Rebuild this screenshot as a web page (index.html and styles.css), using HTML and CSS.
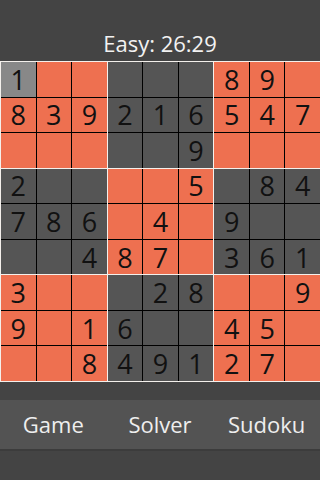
FILE: index.html
```html
<!DOCTYPE html>
<html lang="en">
<head>
  <meta charset="UTF-8">
  <meta name="viewport" content="width=device-width, initial-scale=1.0">
  <title>Sudoku</title>
  <link rel="stylesheet" href="styles.css">
</head>
<body>
  <div class="title">Easy: 26:29</div>
  <div class="board">
    <div class="box warm">
      <div class="cell selected">1</div><div class="cell"></div><div class="cell"></div>
      <div class="cell">8</div><div class="cell">3</div><div class="cell">9</div>
      <div class="cell"></div><div class="cell"></div><div class="cell"></div>
    </div>
    <div class="box cool">
      <div class="cell"></div><div class="cell"></div><div class="cell"></div>
      <div class="cell">2</div><div class="cell">1</div><div class="cell">6</div>
      <div class="cell"></div><div class="cell"></div><div class="cell">9</div>
    </div>
    <div class="box warm">
      <div class="cell">8</div><div class="cell">9</div><div class="cell"></div>
      <div class="cell">5</div><div class="cell">4</div><div class="cell">7</div>
      <div class="cell"></div><div class="cell"></div><div class="cell"></div>
    </div>
    <div class="box cool">
      <div class="cell">2</div><div class="cell"></div><div class="cell"></div>
      <div class="cell">7</div><div class="cell">8</div><div class="cell">6</div>
      <div class="cell"></div><div class="cell"></div><div class="cell">4</div>
    </div>
    <div class="box warm">
      <div class="cell"></div><div class="cell"></div><div class="cell">5</div>
      <div class="cell"></div><div class="cell">4</div><div class="cell"></div>
      <div class="cell">8</div><div class="cell">7</div><div class="cell"></div>
    </div>
    <div class="box cool">
      <div class="cell"></div><div class="cell">8</div><div class="cell">4</div>
      <div class="cell">9</div><div class="cell"></div><div class="cell"></div>
      <div class="cell">3</div><div class="cell">6</div><div class="cell">1</div>
    </div>
    <div class="box warm">
      <div class="cell">3</div><div class="cell"></div><div class="cell"></div>
      <div class="cell">9</div><div class="cell"></div><div class="cell">1</div>
      <div class="cell"></div><div class="cell"></div><div class="cell">8</div>
    </div>
    <div class="box cool">
      <div class="cell"></div><div class="cell">2</div><div class="cell">8</div>
      <div class="cell">6</div><div class="cell"></div><div class="cell"></div>
      <div class="cell">4</div><div class="cell">9</div><div class="cell">1</div>
    </div>
    <div class="box warm">
      <div class="cell"></div><div class="cell"></div><div class="cell">9</div>
      <div class="cell">4</div><div class="cell">5</div><div class="cell"></div>
      <div class="cell">2</div><div class="cell">7</div><div class="cell"></div>
    </div>
  </div>
  <div class="menu">
    <div class="menu-item">Game</div>
    <div class="menu-item">Solver</div>
    <div class="menu-item">Sudoku</div>
  </div>
</body>
</html>
```

FILE: styles.css
```css
body {
  margin: 0;
  background: #444444;
  font-family: 'Open Sans', 'Noto Sans', sans-serif;
  width: 320px;
  height: 480px;
  overflow: hidden;
}
.title {
  height: 61px;
  box-sizing: border-box;
  padding-top: 30px;
  line-height: 26px;
  font-size: 22px;
  color: #f2f2f2;
  text-align: center;
}
.board {
  display: grid;
  grid-template-columns: repeat(3, 1fr);
  grid-template-rows: repeat(3, 1fr);
  gap: 1px;
  padding: 1px 0 1px 1px;
  width: 320px;
  height: 321px;
  box-sizing: border-box;
  background: #f4f0ec;
}
.box {
  display: grid;
  grid-template-columns: repeat(3, 1fr);
  grid-template-rows: repeat(3, 1fr);
  gap: 1px;
  background: #000;
}
.cell {
  display: flex;
  align-items: center;
  justify-content: center;
  font-size: 27px;
  line-height: 1;
  color: #111;
}
.warm .cell {
  background: #ee7050;
}
.cool .cell {
  background: #555555;
}
.cell.selected {
  background: #888888;
}
.menu {
  display: flex;
  margin-top: 18px;
  height: 49px;
  background: #535353;
  border-bottom: 2px solid #3c3c3c;
}
.menu-item {
  flex: 1;
  display: flex;
  align-items: center;
  justify-content: center;
  padding-bottom: 2px;
  font-size: 22px;
  color: #eeeeee;
}
```
